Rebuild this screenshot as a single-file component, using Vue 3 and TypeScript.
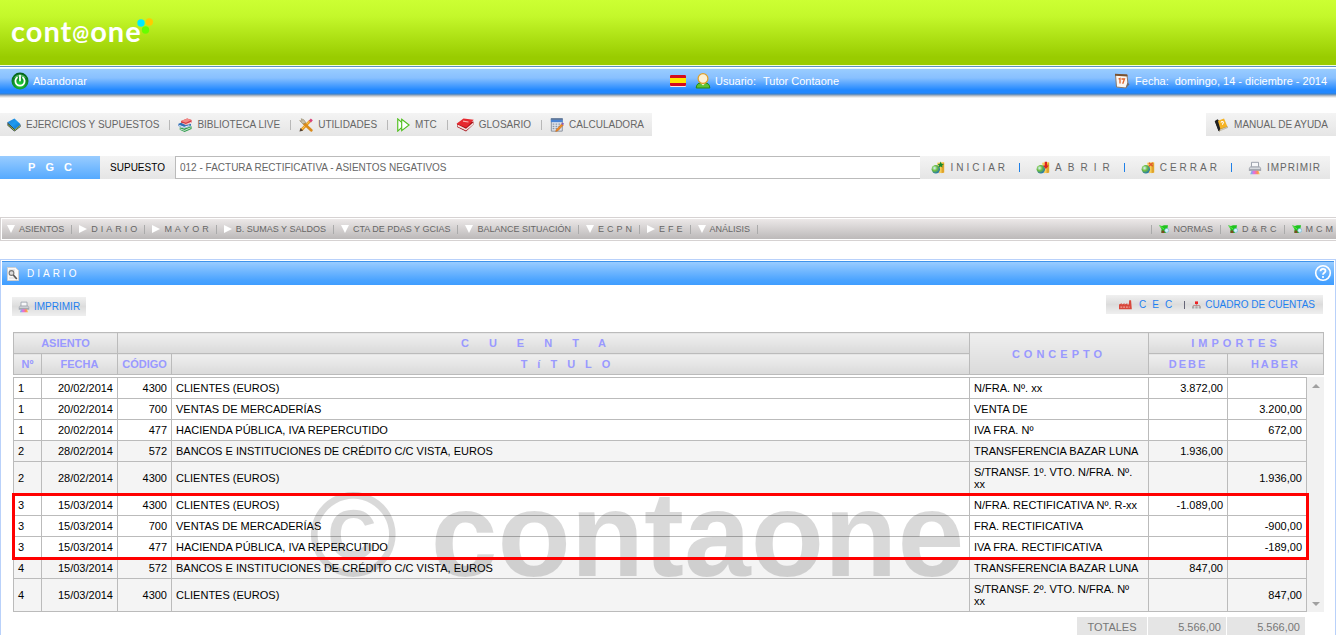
<script setup lang="ts">
import { ref } from 'vue'

interface Item { label: string; icon: string; spacing?: string }
interface Entry { fecha: string; codigo: string; titulo: string; concepto: string; debe: string; haber: string }
interface Asiento { numero: number; marked?: boolean; entries: Entry[] }

const supuesto = ref('012 - FACTURA RECTIFICATIVA - ASIENTOS NEGATIVOS')

const tools: Item[] = [
  { label: 'EJERCICIOS Y SUPUESTOS', icon: 'book' },
  { label: 'BIBLIOTECA LIVE', icon: 'books' },
  { label: 'UTILIDADES', icon: 'tools' },
  { label: 'MTC', icon: 'forward' },
  { label: 'GLOSARIO', icon: 'redbook' },
  { label: 'CALCULADORA', icon: 'calc' },
]

const actions: Item[] = [
  { label: 'INICIAR', icon: 'start', spacing: 'sp3' },
  { label: 'ABRIR', icon: 'open', spacing: 'sp6' },
  { label: 'CERRAR', icon: 'close', spacing: 'sp3' },
  { label: 'IMPRIMIR', icon: 'printer', spacing: 'sp1' },
]

const menu: Item[] = [
  { label: 'ASIENTOS', icon: 'down' },
  { label: 'DIARIO', icon: 'right', spacing: 'sp3' },
  { label: 'MAYOR', icon: 'right', spacing: 'sp3' },
  { label: 'B. SUMAS Y SALDOS', icon: 'right' },
  { label: 'CTA DE PDAS Y GCIAS', icon: 'down' },
  { label: 'BALANCE SITUACIÓN', icon: 'down' },
  { label: 'ECPN', icon: 'down', spacing: 'sp3' },
  { label: 'EFE', icon: 'right', spacing: 'sp3' },
  { label: 'ANÁLISIS', icon: 'down' },
]

const references: Item[] = [
  { label: 'NORMAS', icon: 'norm' },
  { label: 'D&RC', icon: 'norm', spacing: 'sp3' },
  { label: 'MCM', icon: 'norm', spacing: 'sp3' },
]

const asientos: Asiento[] = [
  {
    numero: 1,
    entries: [
      { fecha: '20/02/2014', codigo: '4300', titulo: 'CLIENTES (EUROS)', concepto: 'N/FRA. Nº. xx', debe: '3.872,00', haber: '' },
      { fecha: '20/02/2014', codigo: '700', titulo: 'VENTAS DE MERCADERÍAS', concepto: 'VENTA DE', debe: '', haber: '3.200,00' },
      { fecha: '20/02/2014', codigo: '477', titulo: 'HACIENDA PÚBLICA, IVA REPERCUTIDO', concepto: 'IVA FRA. Nº', debe: '', haber: '672,00' },
    ],
  },
  {
    numero: 2,
    entries: [
      { fecha: '28/02/2014', codigo: '572', titulo: 'BANCOS E INSTITUCIONES DE CRÉDITO C/C VISTA, EUROS', concepto: 'TRANSFERENCIA BAZAR LUNA', debe: '1.936,00', haber: '' },
      { fecha: '28/02/2014', codigo: '4300', titulo: 'CLIENTES (EUROS)', concepto: 'S/TRANSF. 1º. VTO. N/FRA. Nº.\nxx', debe: '', haber: '1.936,00' },
    ],
  },
  {
    numero: 3,
    marked: true,
    entries: [
      { fecha: '15/03/2014', codigo: '4300', titulo: 'CLIENTES (EUROS)', concepto: 'N/FRA. RECTIFICATIVA Nº. R-xx', debe: '-1.089,00', haber: '' },
      { fecha: '15/03/2014', codigo: '700', titulo: 'VENTAS DE MERCADERÍAS', concepto: 'FRA. RECTIFICATIVA', debe: '', haber: '-900,00' },
      { fecha: '15/03/2014', codigo: '477', titulo: 'HACIENDA PÚBLICA, IVA REPERCUTIDO', concepto: 'IVA FRA. RECTIFICATIVA', debe: '', haber: '-189,00' },
    ],
  },
  {
    numero: 4,
    entries: [
      { fecha: '15/03/2014', codigo: '572', titulo: 'BANCOS E INSTITUCIONES DE CRÉDITO C/C VISTA, EUROS', concepto: 'TRANSFERENCIA BAZAR LUNA', debe: '847,00', haber: '' },
      { fecha: '15/03/2014', codigo: '4300', titulo: 'CLIENTES (EUROS)', concepto: 'S/TRANSF. 2º. VTO. N/FRA. Nº\nxx', debe: '', haber: '847,00' },
    ],
  },
]
</script>

<template>
  <div class="page">
    <svg class="sprite" aria-hidden="true">
      <defs>
        <radialGradient id="g-power" cx="50%" cy="70%" r="70%">
          <stop offset="0" stop-color="#1fd83a" /><stop offset="1" stop-color="#04591a" />
        </radialGradient>
        <linearGradient id="g-rainbow">
          <stop offset="0" stop-color="#5ac8f0" /><stop offset=".4" stop-color="#e66be0" /><stop offset=".75" stop-color="#ff8a5c" /><stop offset="1" stop-color="#f3e04a" />
        </linearGradient>
        <radialGradient id="g-globe" cx="35%" cy="35%" r="70%">
          <stop offset="0" stop-color="#d8f3ff" /><stop offset=".45" stop-color="#6fbf3f" /><stop offset="1" stop-color="#1c6fb5" />
        </radialGradient>
        <linearGradient id="g-book" x1="0" y1="0" x2="1" y2="1">
          <stop offset="0" stop-color="#1f7fd0" /><stop offset=".5" stop-color="#1e9bf0" /><stop offset="1" stop-color="#0a6cc0" />
        </linearGradient>
      </defs>
      <symbol id="i-power" viewBox="0 0 18 18">
        <circle cx="9" cy="9" r="8.5" fill="url(#g-power)" />
        <path d="M3 6a7 7 0 0 1 12 0q-6-3-12 0z" fill="#8be89a" opacity=".6" />
        <path d="M6 5.6a4.6 4.6 0 1 0 6 0" fill="none" stroke="#fff" stroke-width="1.8" stroke-linecap="round" />
        <path d="M9 3.6v5" stroke="#fff" stroke-width="1.8" stroke-linecap="round" />
      </symbol>
      <symbol id="i-flag" viewBox="0 0 16 12">
        <rect width="16" height="12" rx="1" fill="#ffe6e0" />
        <rect y="0" width="16" height="11" rx="1" fill="#d40b1e" />
        <rect y="3" width="16" height="5" fill="#ffe600" />
      </symbol>
      <symbol id="i-user" viewBox="0 0 16 16">
        <path d="M1.2 15c0-3.600 2.300-5 4.300-5h5c2 0 4.300 1.400 4.300 5z" fill="#5ec232" stroke="#258a10" />
        <path d="M5.500 10l2.500 2.500 2.500-2.500z" fill="#fff" />
        <circle cx="8" cy="5.600" r="4.900" fill="#fdf0d2" stroke="#e0a02c" stroke-width="1.300" />
      </symbol>
      <symbol id="i-date" viewBox="0 0 16 16">
        <path d="M1.500 1.500l11.500.5 1 9-2 4-9.500-1z" fill="#fbf7f2" stroke="#8a7a6c" />
        <path d="M1 .8l12.400.6v2L1 2.800z" fill="#7a5230" />
        <path d="M11.500 15l4-3.500-2-2z" fill="#6e6e72" />
        <path d="M4.500 6l1.500-.5v5M7.500 6h3L8.700 10.700" fill="none" stroke="#e0642a" stroke-width="1.300" />
      </symbol>
      <symbol id="i-book" viewBox="0 0 16 16">
        <path d="M.5 4.500V8.500l8 7L15.500 10V7.500L9 12.500z" fill="#2b3a44" />
        <path d="M1 7.500l7.500 6.500 6.500-5" fill="none" stroke="#a9c94a" stroke-width="1.100" />
        <path d="M.5 4.800L8.500.500 15.500 7l-6.500 5.800z" fill="url(#g-book)" />
      </symbol>
      <symbol id="i-books" viewBox="0 0 16 16">
        <path d="M3.500 3.500l7-3 5 1.800v2.800L9 8.200 3.500 6z" fill="#d33a42" /><path d="M3.500 3.500l7-3 5 1.800L9 5.500z" fill="#f38a86" /><path d="M4 6l5 1.400L15 5" stroke="#fff" fill="none" stroke-width=".9" />
        <path d="M.5 6.500l3-1L9 8.200l6-1.500-.5 2.500L7 11.500.5 9z" fill="#2f6fb8" /><path d="M1.500 8.500l5.500 2.200 6-2" stroke="#fff" fill="none" stroke-width="1.100" />
        <path d="M2 10.500l5 1.500 8.500-2.500V12.500l-8 3.500L2 13.500z" fill="#2f9c4c" /><path d="M2.500 12.500l5 1.700 7-3" stroke="#fff" fill="none" stroke-width=".9" />
      </symbol>
      <symbol id="i-tools" viewBox="0 0 16 16">
        <path d="M3 13.500L13 3" stroke="#e8981a" stroke-width="3.200" /><path d="M3.500 12.500L12 3.500" stroke="#fdd06a" />
        <path d="M11.300 3l2.200-2.500 2.300 2-2 2.700z" fill="#d8437a" /><path d="M.5 15.500l1.200-4 3 3z" fill="#554232" />
        <path d="M6 6.500l8 7.500" stroke="#d98a1a" stroke-width="3.200" stroke-linecap="round" />
        <path d="M.8 3l3.700 3.900L8 5.500 5.500 2 2.500.800 3.500 3.300z" fill="#c9c0a8" stroke="#8a7a5a" stroke-width=".6" />
      </symbol>
      <symbol id="i-forward" viewBox="0 0 16 16">
        <path d="M7 5.500L2 1v14l5-4.500" fill="#fff" stroke="#4fbf1c" stroke-width="1.300" />
        <path d="M6.500 1.500L15 8l-8.500 6.500z" fill="#fff" stroke="#4fbf1c" stroke-width="1.300" />
      </symbol>
      <symbol id="i-redbook" viewBox="0 0 18 14">
        <path d="M1 6v3l9 4.500 7.500-7V3.500z" fill="#a8151c" /><path d="M1.500 6.500l8.500 4.200 7.300-6.200v2L10 12.500 1.500 8.500z" fill="#f4e6e2" />
        <path d="M.5 5.800L7.500.5l10.300 1.200-7.500 7.800z" fill="#e6292f" /><path d="M7 3.200l5.500.8" stroke="#f9b0ae" stroke-width="1.200" />
      </symbol>
      <symbol id="i-calc" viewBox="0 0 16 16">
        <path d="M1.500 1h12.500v14h-12.500z" fill="#e3e7ee" stroke="#7e8795" /><path d="M1 .5h13.500v4.300H1z" fill="#4a84d4" /><path d="M1 .5h13.500v1.300H1z" fill="#6b7480" />
        <path d="M3 7h9M3 9.500h9M3 12h9" stroke="#8d97a6" stroke-width="1.500" stroke-dasharray="2 1.300" />
        <path d="M7 13.500l6.500-7 1.800 1.500-6.300 6.700-2.500.8z" fill="#f08a24" stroke="#b65a10" stroke-width=".5" /><circle cx="14.500" cy="6.700" r="1.300" fill="#8a5ab8" />
      </symbol>
      <symbol id="i-manual" viewBox="0 0 16 16">
        <path d="M.8 3.500L5 14.500l1.500 1L4 3z" fill="#1a1a1a" /><path d="M1 3.500l3-2 2 1.500 2 9-2.500 3z" fill="#222" />
        <path d="M4.500 3l7-2.500 3.900 9.500-8 3z" fill="#f5b324" /><path d="M6 14.800l9.500-3.800v-1l-8.500 3z" fill="#f8f3e4" stroke="#6a5a30" stroke-width=".4" />
        <path d="M8 5.200c.5-1.700 3-1.500 2.700.2-.2 1-1.200 1-1 2.300" fill="none" stroke="#fff" stroke-width="1.200" />
      </symbol>
      <symbol id="i-start" viewBox="0 0 16 16">
        <path d="M7 2l8-1v12l-6 1z" fill="#f7ce5a" /><path d="M12 4l3-2v11l-3 1z" fill="#e0a42c" />
        <circle cx="5.500" cy="9.500" r="4.800" fill="url(#g-globe)" /><path d="M11 .5l1.200 2.500 2.500.3-2 1.700.5 2.500L11 6.200 8.800 7.500l.5-2.500-1.800-1.700 2.500-.3z" fill="#1c8a2c" />
      </symbol>
      <symbol id="i-open" viewBox="0 0 16 16">
        <path d="M7 2l8-1v12l-6 1z" fill="#f7ce5a" /><path d="M12 4l3-2v11l-3 1z" fill="#e0a42c" />
        <circle cx="5.500" cy="9.500" r="4.800" fill="url(#g-globe)" /><path d="M10 .8h2.600V5h2L11.300 9 8 5h2z" fill="#dc1f1f" />
      </symbol>
      <symbol id="i-close" viewBox="0 0 16 16">
        <path d="M7 2l8-1v12l-6 1z" fill="#f7ce5a" /><path d="M12 4l3-2v11l-3 1z" fill="#e0a42c" />
        <circle cx="5.500" cy="9.500" r="4.800" fill="url(#g-globe)" /><path d="M9 2l4.500 4M13.500 2L9 6" stroke="#e0582c" stroke-width="1.500" />
      </symbol>
      <symbol id="i-printer" viewBox="0 0 16 16">
        <path d="M4 1.500h8v6H4z" fill="#f6f7f9" stroke="#9298a4" />
        <path d="M1 8l2-2h10l2 2v3.500H1z" fill="#a4a8b0" /><path d="M2 8.200h12" stroke="#eceef2" stroke-width="1.200" />
        <path d="M4 11h8l1.500 4h-11z" fill="url(#g-rainbow)" />
      </symbol>
      <symbol id="i-down" viewBox="0 0 8 8"><path d="M0 0h8L4 8z" fill="#fff" /></symbol>
      <symbol id="i-right" viewBox="0 0 8 8"><path d="M0 0l8 4-8 4z" fill="#fff" /></symbol>
      <symbol id="i-norm" viewBox="0 0 10 8">
        <path d="M0 .3l3 .7L5 .300h4L8.500 3 7 8H2.500V4z" fill="#1fc41f" /><path d="M2.500 5.500h3V8h-3z" fill="#7a4a20" />
        <circle cx="7.700" cy="5.400" r="2" fill="#d4f2fc" stroke="#68b4d4" stroke-width=".6" /><path d="M1 1l4 3" stroke="#5fe84a" />
      </symbol>
      <symbol id="i-find" viewBox="0 0 12 14">
        <path d="M.5.500h8l3 3v10H.5z" fill="#fafafa" stroke="#cfcfcf" /><path d="M2 3h6M2 11h7" stroke="#d4d4d4" />
        <circle cx="4.500" cy="6" r="2.400" fill="#dcdcdc" stroke="#777" stroke-width="1.100" /><path d="M6.300 8l3.500 4" stroke="#555" stroke-width="1.700" />
      </symbol>
      <symbol id="i-help" viewBox="0 0 18 18">
        <circle cx="9" cy="9" r="7.300" fill="none" stroke="#fff" stroke-width="1.600" />
        <path d="M6.500 7.300c0-3.300 5-3.300 5-.3 0 1.900-2.500 1.800-2.500 3.800" fill="none" stroke="#fff" stroke-width="1.800" /><circle cx="9" cy="13" r="1.100" fill="#fff" />
      </symbol>
      <symbol id="i-factory" viewBox="0 0 14 10">
        <path d="M0 9.500V4.500l3-1.500v1.500l3-1.500v1.500l3-1.500v1.500h1.500L11 0h2l.8 9.500z" fill="#d8483c" /><path d="M1.500 7.300h10" stroke="#f0a49c" stroke-width="1.200" stroke-dasharray="2 1" />
      </symbol>
      <symbol id="i-tree" viewBox="0 0 10 8">
        <path d="M3.300 0h3.400v3H3.300z" fill="#ee2222" /><path d="M5 3v1.500M1.500 6V4.500h7V6" fill="none" stroke="#b07070" stroke-width=".8" />
        <path d="M0 5.500h2.500V8H0zM3.700 5.500h2.600V8H3.700zM7.500 5.500H10V8H7.500z" fill="#a8a8a8" />
      </symbol>
    </svg>

    <header class="brand">
      <h1 class="logo">cont<span class="at">@</span>one</h1>
      <svg class="dots" viewBox="0 0 16 16" aria-hidden="true">
        <circle cx="4" cy="5" r="3.700" fill="#00eaff" /><circle cx="12.300" cy="4" r="3.700" fill="#ffcc00" /><circle cx="8.500" cy="12" r="3.700" fill="#66ff00" />
      </svg>
    </header>
    <div class="rule"></div>

    <div class="status">
      <div class="half">
        <a href="#" class="group exit"><svg class="i18"><use href="#i-power" /></svg>Abandonar</a>
      </div>
      <div class="half">
        <div class="group">
          <svg class="flag"><use href="#i-flag" /></svg>
          <svg class="i16"><use href="#i-user" /></svg>
          <span>Usuario:</span><span class="value">Tutor Contaone</span>
        </div>
        <div class="group">
          <svg class="i16"><use href="#i-date" /></svg>
          <span class="datelabel">Fecha:</span><span>domingo, 14 - diciembre - 2014</span>
        </div>
      </div>
    </div>

    <nav class="toolrow" aria-label="Herramientas">
      <ul class="strip tools">
        <li v-for="t in tools" :key="t.label">
          <a href="#"><svg :class="t.icon === 'redbook' ? 'wide' : 'i14'"><use :href="'#i-' + t.icon" /></svg>{{ t.label }}</a>
        </li>
      </ul>
      <a href="#" class="strip manual"><svg class="i14"><use href="#i-manual" /></svg>MANUAL DE AYUDA</a>
    </nav>

    <div class="caserow">
      <strong class="pgc">PGC</strong>
      <label class="caselabel" for="supuesto">SUPUESTO</label>
      <input id="supuesto" v-model="supuesto" class="case" type="text" readonly />
      <div class="strip actions">
        <button v-for="a in actions" :key="a.label" type="button">
          <svg class="i14"><use :href="'#i-' + a.icon" /></svg><span :class="a.spacing">{{ a.label }}</span>
        </button>
      </div>
    </div>

    <nav class="menubar" aria-label="Libros">
      <div class="menu">
        <ul>
          <li v-for="m in menu" :key="m.label">
            <a href="#"><svg class="arrow"><use :href="'#i-' + m.icon" /></svg><span :class="m.spacing">{{ m.label }}</span></a>
          </li>
        </ul>
        <ul class="refs">
          <li v-for="r in references" :key="r.label">
            <a href="#"><svg class="norm"><use href="#i-norm" /></svg><span :class="r.spacing">{{ r.label }}</span></a>
          </li>
        </ul>
      </div>
    </nav>

    <main class="panel">
      <div class="title">
        <svg class="find"><use href="#i-find" /></svg>
        <h2 class="sp3">DIARIO</h2>
        <button type="button" class="help" aria-label="Ayuda"><svg class="i18"><use href="#i-help" /></svg></button>
      </div>

      <div class="subbar">
        <button type="button" class="chip print"><svg class="i12"><use href="#i-printer" /></svg>IMPRIMIR</button>
        <div class="chip links">
          <a href="#" class="cec"><svg class="factory"><use href="#i-factory" /></svg><span>CEC</span></a>
          <i class="bar"></i>
          <a href="#"><svg class="tree"><use href="#i-tree" /></svg>CUADRO DE CUENTAS</a>
        </div>
      </div>

      <section class="ledger">
        <table class="head">
          <colgroup><col class="c-num" /><col class="c-date" /><col class="c-code" /><col /><col class="c-con" /><col class="c-amt" /><col class="c-last" /></colgroup>
          <thead>
            <tr>
              <th colspan="2">ASIENTO</th>
              <th colspan="2" class="sp20">CUENTA</th>
              <th rowspan="2" class="sp4">CONCEPTO</th>
              <th colspan="2" class="sp4">IMPORTES</th>
            </tr>
            <tr>
              <th>Nº</th><th>FECHA</th><th>CÓDIGO</th><th class="sp10">TíTULO</th><th class="sp2">DEBE</th><th class="sp2">HABER</th>
            </tr>
          </thead>
        </table>

        <div class="body">
          <table class="rows" aria-label="Diario">
            <colgroup><col class="c-num" /><col class="c-date" /><col class="c-code" /><col /><col class="c-con" /><col class="c-amt" /><col class="c-amt" /></colgroup>
            <tbody v-for="a in asientos" :key="a.numero" :class="{ marked: a.marked }">
              <tr v-for="(e, i) in a.entries" :key="i">
                <td>{{ a.numero }}</td>
                <td class="r">{{ e.fecha }}</td>
                <td class="r">{{ e.codigo }}</td>
                <td>{{ e.titulo }}</td>
                <td class="concept">{{ e.concepto }}</td>
                <td class="r">{{ e.debe }}</td>
                <td class="r">{{ e.haber }}</td>
              </tr>
            </tbody>
          </table>
          <div class="scroll">
            <button type="button" aria-label="Subir"><svg viewBox="0 0 8 4"><path d="M0 4l4-4 4 4z" fill="#a0a0a0" /></svg></button>
            <button type="button" aria-label="Bajar"><svg viewBox="0 0 8 4"><path d="M0 0h8L4 4z" fill="#a0a0a0" /></svg></button>
          </div>
          <div class="watermark">© contaone</div>
        </div>

        <div class="totals">
          <span class="name">TOTALES</span><span class="sum">5.566,00</span><span class="sum">5.566,00</span>
        </div>
      </section>
    </main>
  </div>
</template>

<style>
body { margin: 0; background: #fff; }
</style>

<style scoped>
.page {
  height: 100vh;
  overflow: hidden;
  display: flex;
  flex-direction: column;
  font-family: "Liberation Sans", Arial, sans-serif;
  font-size: 10px;
  line-height: 12px;
  color: #666;
}
.page > * { flex-shrink: 0; }
.page * { box-sizing: border-box; }
.sprite { position: absolute; width: 0; height: 0; }
svg { display: block; flex: none; }
a { color: inherit; text-decoration: none; }
button { border: 0; padding: 0; margin: 0; background: none; font: inherit; color: inherit; cursor: pointer; }
ul { list-style: none; margin: 0; padding: 0; display: flex; }
h1, h2 { margin: 0; font: inherit; }
.i18 { width: 18px; height: 18px; }
.i16 { width: 16px; height: 16px; }
.i14 { width: 14px; height: 14px; }
.i12 { width: 12px; height: 12px; }
.wide { width: 18px; height: 14px; }
.sp1 { letter-spacing: 1px; margin-right: -1px; }
.sp3 { letter-spacing: 3px; margin-right: -3px; }
.sp6 { letter-spacing: 6px; margin-right: -6px; }

.brand {
  height: 65px;
  padding: 0 0 4px 11px;
  display: flex;
  align-items: center;
  background: linear-gradient(#ccff33, #c4f82b 25%, #99cc00 88%);
}
.logo {
  font-family: Lato, "Open Sans", sans-serif;
  font-weight: 700;
  font-size: 29px;
  line-height: 36px;
  letter-spacing: 1px;
  color: #fff;
}
.at { font-size: 20px; line-height: 20px; vertical-align: 2px; }
.dots { width: 16px; height: 16px; margin: 0 0 10px -5px; }
.rule { height: 4px; background: linear-gradient(#f4ffe0 1px, #5b92c4 1px 2px, #fff 2px 3px, #e2f6ff 3px); }

.status {
  display: grid;
  grid-template-columns: 1fr 1fr;
  height: 29px;
  padding-bottom: 5px;
  background: linear-gradient(#99ccff, #88c0ff 9px, #2288ff 21px, #2288ff 24px, #3b7fc8 25px, #8ca3be 26px, #bfc3c9 27px, #e6e6e6 28px, #f8f8f8);
  color: #fff;
  font-size: 11px;
}
.half { display: flex; justify-content: space-between; align-items: center; padding-right: 9px; }
.group { display: flex; align-items: center; gap: 4px; }
.exit { padding-left: 11px; }
.flag { width: 16px; height: 12px; margin: 0 5px 0 2px; }
.value { margin-left: 3px; }
.datelabel { margin: 0 2px 0 1px; }

.strip { background: linear-gradient(#f4f4f4, #e5e5e5); height: 23px; }
.toolrow { display: flex; justify-content: space-between; margin-top: 15px; }
.tools li { display: flex; align-items: center; padding: 0 0 0 8px; }
.tools li:first-child { padding-left: 7px; }
.tools li:last-child { padding-right: 8px; }
.tools li:not(:last-child)::after { content: ""; width: 1px; height: 10px; margin-left: 10px; background: #b8b8b8; }
.tools a, .manual { display: flex; align-items: center; gap: 5px; }
.manual { padding: 0 8px; gap: 6px; }

.caserow { display: flex; height: 23px; margin: 20px 6px 0 0; }
.pgc {
  width: 100px;
  padding-left: 10px;
  text-align: center;
  letter-spacing: 10px;
  font-size: 11px;
  line-height: 23px;
  color: #fff;
  background: linear-gradient(#99ccff, #55aaff);
}
.caselabel { width: 75px; text-align: center; line-height: 23px; color: #000; background: linear-gradient(#f4f4f4, #e5e5e5); }
.case {
  flex: 1;
  min-width: 0;
  margin: 0;
  padding: 0 4px;
  border: 1px solid #bbb;
  border-right: 0;
  border-radius: 0;
  outline: none;
  font: inherit;
  color: #666;
  background: #fff;
}
.actions { display: flex; align-items: center; padding: 0 10px 0 11px; }
.actions button { display: flex; align-items: center; gap: 5px; }
.actions button:not(:last-child)::after { content: ""; width: 1px; height: 9px; margin: 0 16px 0 9px; background: #1e80e8; }

.menubar { margin-top: 38px; padding: 1px 0 1px 1px; border: 1px solid #d6d2d2; border-right: 0; }
.menu {
  display: flex;
  justify-content: space-between;
  height: 20px;
  font-size: 9px;
  background: linear-gradient(#ece8e8, #bcb9b9);
}
.menu li { display: flex; align-items: center; }
.menu a { display: flex; align-items: center; gap: 4px; padding: 0 7px; }
.menu li:first-child a { padding-left: 5px; }
.menu ul:first-child li::after, .refs li::before { content: ""; width: 1px; height: 9px; background: #aaa; }
.menu .refs li a { padding: 0 7px; }
.menu .refs li:last-child a { padding-right: 3px; }
.arrow { width: 8px; height: 8px; }
.norm { width: 10px; height: 8px; }

.panel { flex: 1 0 auto; margin-top: 18px; padding: 1px; border: 1px solid #b9d1fa; border-bottom: 0; }
.title {
  display: flex;
  align-items: center;
  height: 24px;
  padding: 0 2px 0 5px;
  border-top: 1px solid #3f93ea;
  color: #fff;
  background: linear-gradient(#99ccff, #4aa3ff 80%, #3f9dff);
}
.find { width: 12px; height: 14px; margin-right: 8px; }
.help { margin: 0 0 2px auto; }
.subbar { display: flex; justify-content: space-between; align-items: flex-start; padding: 10px 11px 0 10px; }
.chip { display: flex; align-items: center; height: 19px; color: #1e80f0; background: linear-gradient(#f0f0f0, #dcdcdc 50%, #efefef); }
.print { margin-top: 2px; padding: 0 6px; gap: 4px; }
.links { padding: 0 8px 0 13px; }
.links a { display: flex; align-items: center; gap: 4px; }
.cec { letter-spacing: 6px; }
.links .cec { gap: 7px; }
.bar { width: 1px; height: 8px; margin: 0 7px 0 6px; background: #667; }
.factory { width: 13px; height: 10px; }
.tree { width: 9px; height: 8px; }

.ledger { margin: 16px 10px 0 11px; font-size: 11px; color: #000; }
table { border-collapse: collapse; table-layout: fixed; width: 100%; }
.c-num { width: 28px; }
.c-date { width: 76px; }
.c-code { width: 54px; }
.c-con { width: 179px; }
.c-amt { width: 79px; }
.c-last { width: 96px; }
th { height: 21px; padding: 0; border: 1px solid #bbb; color: #9999ff; background: linear-gradient(#efefef, #dadada); }
.sp2 { letter-spacing: 2px; }
.sp4 { letter-spacing: 4px; }
.sp10 { letter-spacing: 10px; }
.sp20 { letter-spacing: 20px; }
.body { position: relative; display: flex; align-items: flex-start; margin-top: 2px; }
.rows { flex: 1; width: auto; }
td { height: 21px; padding: 0 4px; border: 1px solid #bbb; }
.concept { white-space: pre-line; padding: 4px 0 4px 4px; }
tbody:nth-of-type(even) td { background: #f4f4f4; }
.r { text-align: right; }
.marked { position: relative; z-index: 2; outline: 3px solid #f00; outline-offset: -1px; }
.scroll { align-self: stretch; width: 17px; display: flex; flex-direction: column; justify-content: space-between; background: #f1f1f1; }
.scroll button { height: 17px; display: flex; align-items: center; justify-content: center; }
.scroll svg { width: 8px; height: 4px; }
.watermark {
  position: absolute;
  z-index: 1;
  left: 296px;
  bottom: 10px;
  font-weight: 700;
  font-size: 120px;
  line-height: 136px;
  white-space: nowrap;
  color: rgba(0, 0, 0, 0.15);
  pointer-events: none;
}
.totals { display: flex; justify-content: flex-end; gap: 1px; margin: 5px 19px 0 0; color: #777; line-height: 20px; }
.totals span { background: #e5e5e5; }
.name { width: 70px; text-align: center; }
.sum { width: 78px; padding-right: 5px; text-align: right; }
</style>
